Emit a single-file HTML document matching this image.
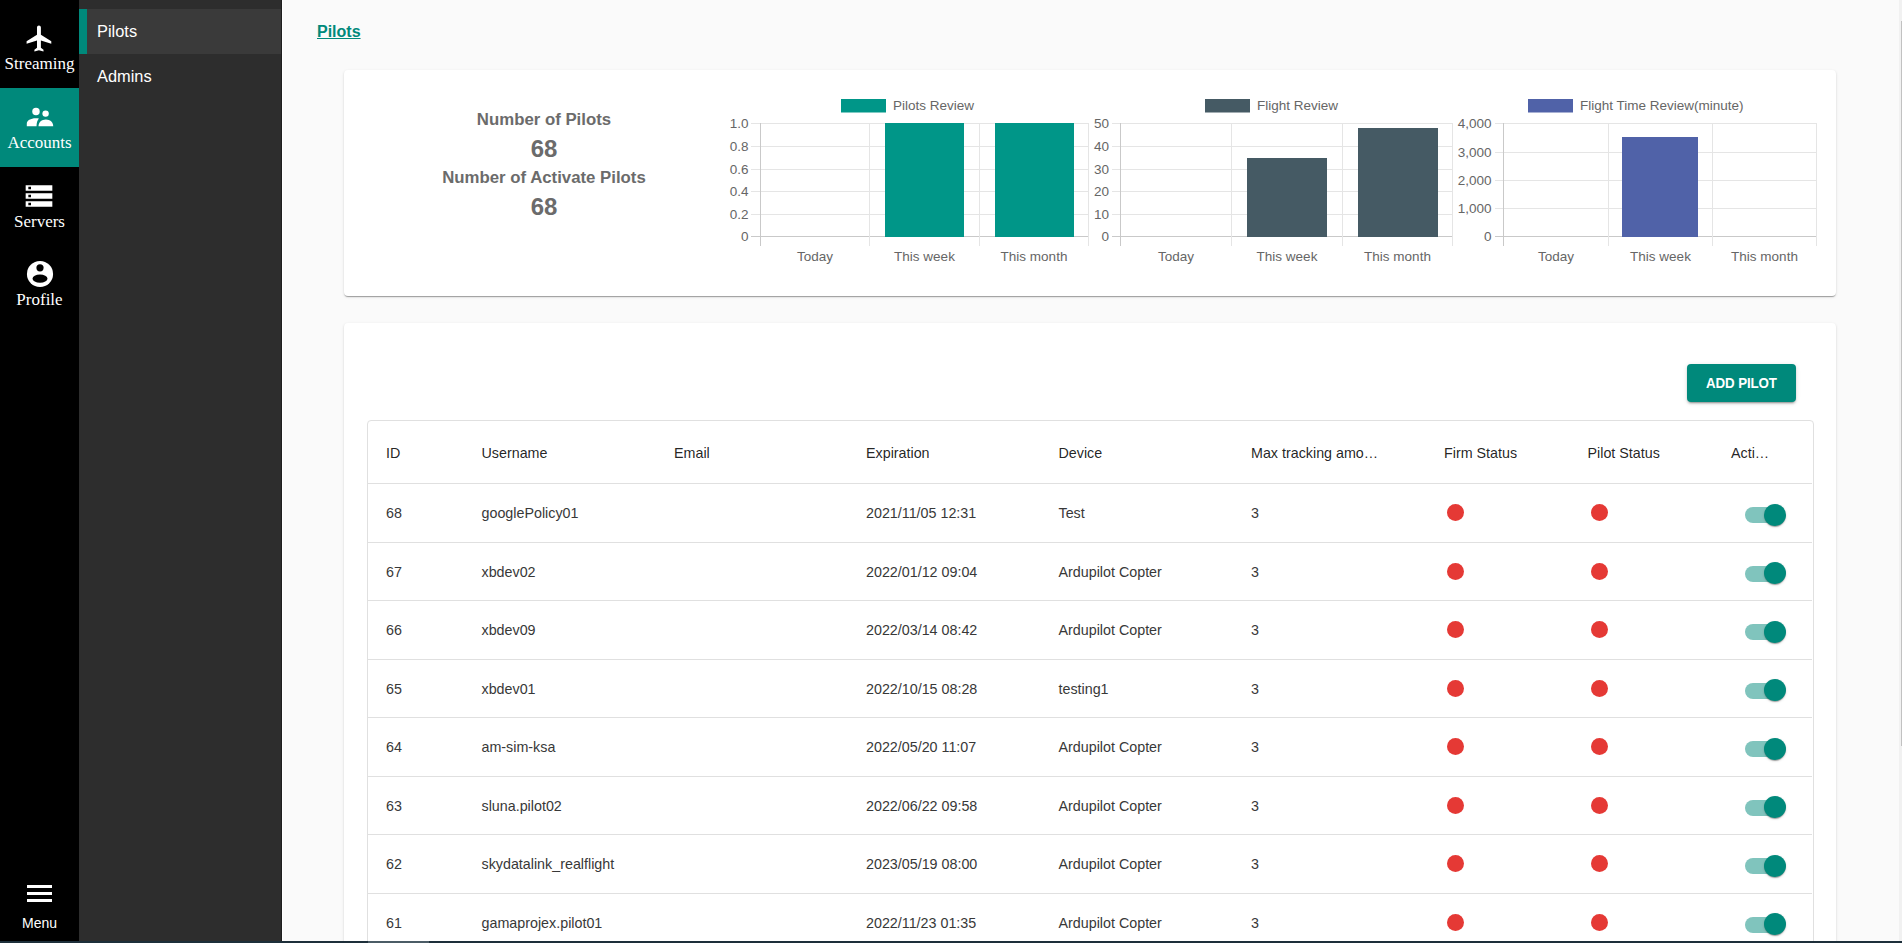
<!DOCTYPE html>
<html><head><meta charset="utf-8">
<style>
*{box-sizing:border-box;margin:0;padding:0}
html,body{width:1902px;height:943px;overflow:hidden;background:#fafafa;font-family:"Liberation Sans",sans-serif}
.abs{position:absolute}
#rail{left:0;top:0;width:79px;height:941px;background:#000}
.ri{position:absolute;left:0;width:79px;height:79px;color:#fff;font-family:"Liberation Serif",serif;font-size:17px;text-align:center}
.ri svg{position:absolute;left:23.5px;top:13px;width:32px;height:32px}
.ri span{position:absolute;left:0;right:0;top:45px;line-height:19px;white-space:nowrap}
#sub{left:79px;top:0;width:203px;height:941px;background:#2d2d2d}
.si{position:absolute;left:0;width:203px;height:45px;color:#fff;font-size:16.4px;line-height:45px;padding-left:18px}
#main{left:282px;top:0;width:1617px;height:941px;background:#fafafa}
.card{position:absolute;left:344px;width:1492px;background:#fff;border-radius:4px;box-shadow:0 2px 1px -1px rgba(0,0,0,.2),0 1px 1px 0 rgba(0,0,0,.14),0 1px 3px 0 rgba(0,0,0,.12)}
.st{position:absolute;left:344px;width:400px;text-align:center;color:#6b6b6b;font-weight:bold;white-space:nowrap}
.tb{position:absolute;font-size:14.3px;color:#383838;white-space:nowrap;line-height:20px}
.th{position:absolute;font-size:14.3px;color:rgba(0,0,0,.87);white-space:nowrap;line-height:20px}
.hl{position:absolute;left:368px;width:1444px;height:1px;background:#e0e0e0}
.dot{position:absolute;width:17px;height:17px;border-radius:50%;background:#e53935}
.sw-t{position:absolute;width:34px;height:16px;border-radius:8px;background:#80c4bd}
.sw-h{position:absolute;width:22px;height:22px;border-radius:50%;background:#00897b;box-shadow:0 2px 1px -1px rgba(0,0,0,.2),0 1px 1px 0 rgba(0,0,0,.14),0 1px 3px 0 rgba(0,0,0,.12)}
</style></head><body>

<!-- icon rail -->
<div id="rail" class="abs">
  <div class="ri" style="top:9px">
    <svg viewBox="0 0 24 24" style="left:23.8px;top:14px;width:31.2px;height:31.2px"><path fill="#fff" d="M21 16v-2l-8-5V3.5c0-.83-.67-1.5-1.5-1.5S10 2.67 10 3.5V9l-8 5v2l8-2.5V19l-2 1.5V22l3.5-1 3.5 1v-1.5L13 19v-5.5l8 2.5z"/></svg>
    <span>Streaming</span>
  </div>
  <div class="ri" style="top:88px;background:#00897b">
    <svg viewBox="0 0 24 24"><g fill="#fff"><circle cx="9" cy="7.9" r="2.8"/><circle cx="16.2" cy="9.45" r="2.4"/><path d="M2.1 19 L2.1 17 C2.1 14.6 5 12.9 8.8 12.9 C9.7 12.9 10.5 13 11.2 13.2 C10 14.4 9.4 16.6 9.4 19 Z"/><path d="M10.9 19 C10.9 16 13.3 13.95 16.4 13.95 C19.5 13.95 21.9 16 21.9 19 Z"/></g></svg>
    <span>Accounts</span>
  </div>
  <div class="ri" style="top:167px">
    <svg viewBox="0 0 24 24" style="left:23px"><path fill="#fff" d="M2 20h20v-4H2v4zm2-3h2v2H4v-2zM2 4v4h20V4H2zm4 3H4V5h2v2zm-4 7h20v-4H2v4zm2-3h2v2H4v-2z"/></svg>
    <span>Servers</span>
  </div>
  <div class="ri" style="top:245.3px">
    <svg viewBox="0 0 24 24"><g><circle cx="12" cy="12" r="9.8" fill="#fff"/><circle cx="12" cy="7.4" r="2.7" fill="#000"/><ellipse cx="12" cy="15.5" rx="5.6" ry="3.1" fill="#000"/></g></svg>
    <span>Profile</span>
  </div>
  <div class="abs" style="left:27px;top:885px;width:25px;height:3px;background:#fff"></div>
  <div class="abs" style="left:27px;top:892px;width:25px;height:3px;background:#fff"></div>
  <div class="abs" style="left:27px;top:899px;width:25px;height:3px;background:#fff"></div>
  <div class="abs" style="left:0;width:79px;top:913px;text-align:center;color:#fff;font-size:14px;line-height:20px">Menu</div>
</div>

<!-- submenu -->
<div id="sub" class="abs">
  <div class="si" style="top:9px;background:#3a3a3a"><div class="abs" style="left:0;top:0;width:8px;height:45px;background:#00897b"></div>Pilots</div>
  <div class="si" style="top:54px">Admins</div>
</div>

<div class="abs" style="left:281px;top:0;width:1px;height:941px;background:#1e1e1e"></div>
<div class="abs" style="left:282px;top:0;width:1px;height:941px;background:#fff"></div>
<!-- main -->
<div id="main" class="abs" style="left:283px;width:1616px"></div>

<a class="abs" style="left:317px;top:22px;color:#00897b;font-weight:bold;font-size:16px;line-height:20px;text-decoration:underline">Pilots</a>

<!-- card 1 -->
<div class="card" style="top:70px;height:226px"></div>
<div class="st" style="top:108px;font-size:16.8px;line-height:24px">Number of Pilots</div>
<div class="st" style="top:134px;font-size:24px;line-height:30px">68</div>
<div class="st" style="top:166px;font-size:16.8px;line-height:24px">Number of Activate Pilots</div>
<div class="st" style="top:192px;font-size:24px;line-height:30px">68</div>

<svg class="abs" style="left:0;top:0" width="1902" height="943" font-family="Liberation Sans" font-size="13.5" fill="#666">
  <!-- chart 1 -->
  <rect x="751" y="123" width="338" height="1" fill="#e5e5e5"/>
<rect x="751" y="146" width="338" height="1" fill="#e5e5e5"/>
<rect x="751" y="169" width="338" height="1" fill="#e5e5e5"/>
<rect x="751" y="191" width="338" height="1" fill="#e5e5e5"/>
<rect x="751" y="214" width="338" height="1" fill="#e5e5e5"/>
<rect x="751" y="236" width="338" height="1" fill="#c9c9c9"/>
<rect x="760" y="123" width="1" height="123" fill="#c9c9c9"/>
<rect x="869" y="123" width="1" height="123" fill="#e5e5e5"/>
<rect x="979" y="123" width="1" height="123" fill="#e5e5e5"/>
<rect x="1088" y="123" width="1" height="123" fill="#e5e5e5"/>
<text x="748.5" y="128.3" text-anchor="end">1.0</text>
<text x="748.5" y="151.3" text-anchor="end">0.8</text>
<text x="748.5" y="174.3" text-anchor="end">0.6</text>
<text x="748.5" y="196.3" text-anchor="end">0.4</text>
<text x="748.5" y="219.3" text-anchor="end">0.2</text>
<text x="748.5" y="241.3" text-anchor="end">0</text>
<rect x="885" y="123" width="79" height="114" fill="#009688"/>
<rect x="995" y="123" width="79" height="114" fill="#009688"/>
<text x="815.0" y="260.9" text-anchor="middle">Today</text>
<text x="924.5" y="260.9" text-anchor="middle">This week</text>
<text x="1034.0" y="260.9" text-anchor="middle">This month</text>
<rect x="841" y="99" width="45" height="13.5" fill="#009688"/>
<text x="893" y="110">Pilots Review</text>
<rect x="1112" y="123" width="341" height="1" fill="#e5e5e5"/>
<rect x="1112" y="146" width="341" height="1" fill="#e5e5e5"/>
<rect x="1112" y="169" width="341" height="1" fill="#e5e5e5"/>
<rect x="1112" y="191" width="341" height="1" fill="#e5e5e5"/>
<rect x="1112" y="214" width="341" height="1" fill="#e5e5e5"/>
<rect x="1112" y="236" width="341" height="1" fill="#c9c9c9"/>
<rect x="1120" y="123" width="1" height="123" fill="#c9c9c9"/>
<rect x="1231" y="123" width="1" height="123" fill="#e5e5e5"/>
<rect x="1342" y="123" width="1" height="123" fill="#e5e5e5"/>
<rect x="1452" y="123" width="1" height="123" fill="#e5e5e5"/>
<text x="1109" y="128.3" text-anchor="end">50</text>
<text x="1109" y="151.3" text-anchor="end">40</text>
<text x="1109" y="174.3" text-anchor="end">30</text>
<text x="1109" y="196.3" text-anchor="end">20</text>
<text x="1109" y="219.3" text-anchor="end">10</text>
<text x="1109" y="241.3" text-anchor="end">0</text>
<rect x="1247" y="158" width="80" height="79" fill="#455a64"/>
<rect x="1358" y="128" width="80" height="109" fill="#455a64"/>
<text x="1176.0" y="260.9" text-anchor="middle">Today</text>
<text x="1287.0" y="260.9" text-anchor="middle">This week</text>
<text x="1397.5" y="260.9" text-anchor="middle">This month</text>
<rect x="1205" y="99" width="45" height="13.5" fill="#455a64"/>
<text x="1257" y="110">Flight Review</text>
<rect x="1495" y="123" width="322" height="1" fill="#e5e5e5"/>
<rect x="1495" y="152" width="322" height="1" fill="#e5e5e5"/>
<rect x="1495" y="180" width="322" height="1" fill="#e5e5e5"/>
<rect x="1495" y="208" width="322" height="1" fill="#e5e5e5"/>
<rect x="1495" y="236" width="322" height="1" fill="#c9c9c9"/>
<rect x="1503" y="123" width="1" height="123" fill="#c9c9c9"/>
<rect x="1608" y="123" width="1" height="123" fill="#e5e5e5"/>
<rect x="1712" y="123" width="1" height="123" fill="#e5e5e5"/>
<rect x="1816" y="123" width="1" height="123" fill="#e5e5e5"/>
<text x="1491.5" y="128.3" text-anchor="end">4,000</text>
<text x="1491.5" y="157.3" text-anchor="end">3,000</text>
<text x="1491.5" y="185.3" text-anchor="end">2,000</text>
<text x="1491.5" y="213.3" text-anchor="end">1,000</text>
<text x="1491.5" y="241.3" text-anchor="end">0</text>
<rect x="1622" y="137" width="76" height="100" fill="#5062a8"/>
<text x="1556.0" y="260.9" text-anchor="middle">Today</text>
<text x="1660.5" y="260.9" text-anchor="middle">This week</text>
<text x="1764.5" y="260.9" text-anchor="middle">This month</text>
<rect x="1528" y="99" width="45" height="13.5" fill="#5062a8"/>
<text x="1580" y="110">Flight Time Review(minute)</text>
</svg>

<!-- card 2 -->
<div class="card" style="top:323px;height:700px"></div>
<div class="abs" style="left:1687px;top:364px;width:109px;height:38px;background:#00897b;border-radius:4px;color:#fff;font-weight:bold;font-size:14.8px;line-height:38px;text-align:center;letter-spacing:-0.1px;box-shadow:0 3px 1px -2px rgba(0,0,0,.2),0 2px 2px 0 rgba(0,0,0,.14),0 1px 5px 0 rgba(0,0,0,.12)"><span style="display:inline-block;transform:scaleX(0.9)">ADD PILOT</span></div>

<div class="abs" style="left:367px;top:420px;width:1447px;height:600px;border:1px solid #e0e0e0;border-radius:4px"></div>
<div class="th" style="left:386px;top:442.7px">ID</div>
<div class="th" style="left:481.5px;top:442.7px">Username</div>
<div class="th" style="left:674px;top:442.7px">Email</div>
<div class="th" style="left:866px;top:442.7px">Expiration</div>
<div class="th" style="left:1058.5px;top:442.7px">Device</div>
<div class="th" style="left:1251px;top:442.7px">Max tracking amo…</div>
<div class="th" style="left:1444px;top:442.7px">Firm Status</div>
<div class="th" style="left:1587.5px;top:442.7px">Pilot Status</div>
<div class="th" style="left:1731px;top:442.7px">Acti…</div>
<div class="hl" style="top:483px"></div>
<div class="hl" style="top:542px"></div>
<div class="hl" style="top:600px"></div>
<div class="hl" style="top:659px"></div>
<div class="hl" style="top:717px"></div>
<div class="hl" style="top:776px"></div>
<div class="hl" style="top:834px"></div>
<div class="hl" style="top:893px"></div>
<div class="tb" style="left:386px;top:503.0px">68</div>
<div class="tb" style="left:481.5px;top:503.0px">googlePolicy01</div>
<div class="tb" style="left:866px;top:503.0px">2021/11/05 12:31</div>
<div class="tb" style="left:1058.5px;top:503.0px">Test</div>
<div class="tb" style="left:1251px;top:503.0px">3</div>
<div class="dot" style="left:1447px;top:504.0px"></div>
<div class="dot" style="left:1591px;top:504.0px"></div>
<div class="sw-t" style="left:1745px;top:507.0px"></div>
<div class="sw-h" style="left:1764px;top:503.5px"></div>
<div class="tb" style="left:386px;top:561.5px">67</div>
<div class="tb" style="left:481.5px;top:561.5px">xbdev02</div>
<div class="tb" style="left:866px;top:561.5px">2022/01/12 09:04</div>
<div class="tb" style="left:1058.5px;top:561.5px">Ardupilot Copter</div>
<div class="tb" style="left:1251px;top:561.5px">3</div>
<div class="dot" style="left:1447px;top:562.5px"></div>
<div class="dot" style="left:1591px;top:562.5px"></div>
<div class="sw-t" style="left:1745px;top:565.5px"></div>
<div class="sw-h" style="left:1764px;top:562.0px"></div>
<div class="tb" style="left:386px;top:620.0px">66</div>
<div class="tb" style="left:481.5px;top:620.0px">xbdev09</div>
<div class="tb" style="left:866px;top:620.0px">2022/03/14 08:42</div>
<div class="tb" style="left:1058.5px;top:620.0px">Ardupilot Copter</div>
<div class="tb" style="left:1251px;top:620.0px">3</div>
<div class="dot" style="left:1447px;top:621.0px"></div>
<div class="dot" style="left:1591px;top:621.0px"></div>
<div class="sw-t" style="left:1745px;top:624.0px"></div>
<div class="sw-h" style="left:1764px;top:620.5px"></div>
<div class="tb" style="left:386px;top:678.5px">65</div>
<div class="tb" style="left:481.5px;top:678.5px">xbdev01</div>
<div class="tb" style="left:866px;top:678.5px">2022/10/15 08:28</div>
<div class="tb" style="left:1058.5px;top:678.5px">testing1</div>
<div class="tb" style="left:1251px;top:678.5px">3</div>
<div class="dot" style="left:1447px;top:679.5px"></div>
<div class="dot" style="left:1591px;top:679.5px"></div>
<div class="sw-t" style="left:1745px;top:682.5px"></div>
<div class="sw-h" style="left:1764px;top:679.0px"></div>
<div class="tb" style="left:386px;top:737.0px">64</div>
<div class="tb" style="left:481.5px;top:737.0px">am-sim-ksa</div>
<div class="tb" style="left:866px;top:737.0px">2022/05/20 11:07</div>
<div class="tb" style="left:1058.5px;top:737.0px">Ardupilot Copter</div>
<div class="tb" style="left:1251px;top:737.0px">3</div>
<div class="dot" style="left:1447px;top:738.0px"></div>
<div class="dot" style="left:1591px;top:738.0px"></div>
<div class="sw-t" style="left:1745px;top:741.0px"></div>
<div class="sw-h" style="left:1764px;top:737.5px"></div>
<div class="tb" style="left:386px;top:795.5px">63</div>
<div class="tb" style="left:481.5px;top:795.5px">sluna.pilot02</div>
<div class="tb" style="left:866px;top:795.5px">2022/06/22 09:58</div>
<div class="tb" style="left:1058.5px;top:795.5px">Ardupilot Copter</div>
<div class="tb" style="left:1251px;top:795.5px">3</div>
<div class="dot" style="left:1447px;top:796.5px"></div>
<div class="dot" style="left:1591px;top:796.5px"></div>
<div class="sw-t" style="left:1745px;top:799.5px"></div>
<div class="sw-h" style="left:1764px;top:796.0px"></div>
<div class="tb" style="left:386px;top:854.0px">62</div>
<div class="tb" style="left:481.5px;top:854.0px">skydatalink_realflight</div>
<div class="tb" style="left:866px;top:854.0px">2023/05/19 08:00</div>
<div class="tb" style="left:1058.5px;top:854.0px">Ardupilot Copter</div>
<div class="tb" style="left:1251px;top:854.0px">3</div>
<div class="dot" style="left:1447px;top:855.0px"></div>
<div class="dot" style="left:1591px;top:855.0px"></div>
<div class="sw-t" style="left:1745px;top:858.0px"></div>
<div class="sw-h" style="left:1764px;top:854.5px"></div>
<div class="tb" style="left:386px;top:912.5px">61</div>
<div class="tb" style="left:481.5px;top:912.5px">gamaprojex.pilot01</div>
<div class="tb" style="left:866px;top:912.5px">2022/11/23 01:35</div>
<div class="tb" style="left:1058.5px;top:912.5px">Ardupilot Copter</div>
<div class="tb" style="left:1251px;top:912.5px">3</div>
<div class="dot" style="left:1447px;top:913.5px"></div>
<div class="dot" style="left:1591px;top:913.5px"></div>
<div class="sw-t" style="left:1745px;top:916.5px"></div>
<div class="sw-h" style="left:1764px;top:913.0px"></div>

<div class="abs" style="left:1899px;top:0;width:3px;height:941px;background:#f1f1f1"></div>
<div class="abs" style="left:1901px;top:21px;width:1px;height:725px;background:#c1c1c1"></div>
<div class="abs" style="left:0;top:941px;width:1902px;height:2px;background:#1d2f3a"></div>
<div class="abs" style="left:368px;top:941px;width:61px;height:2px;background:#4b5c66"></div>
</body></html>
